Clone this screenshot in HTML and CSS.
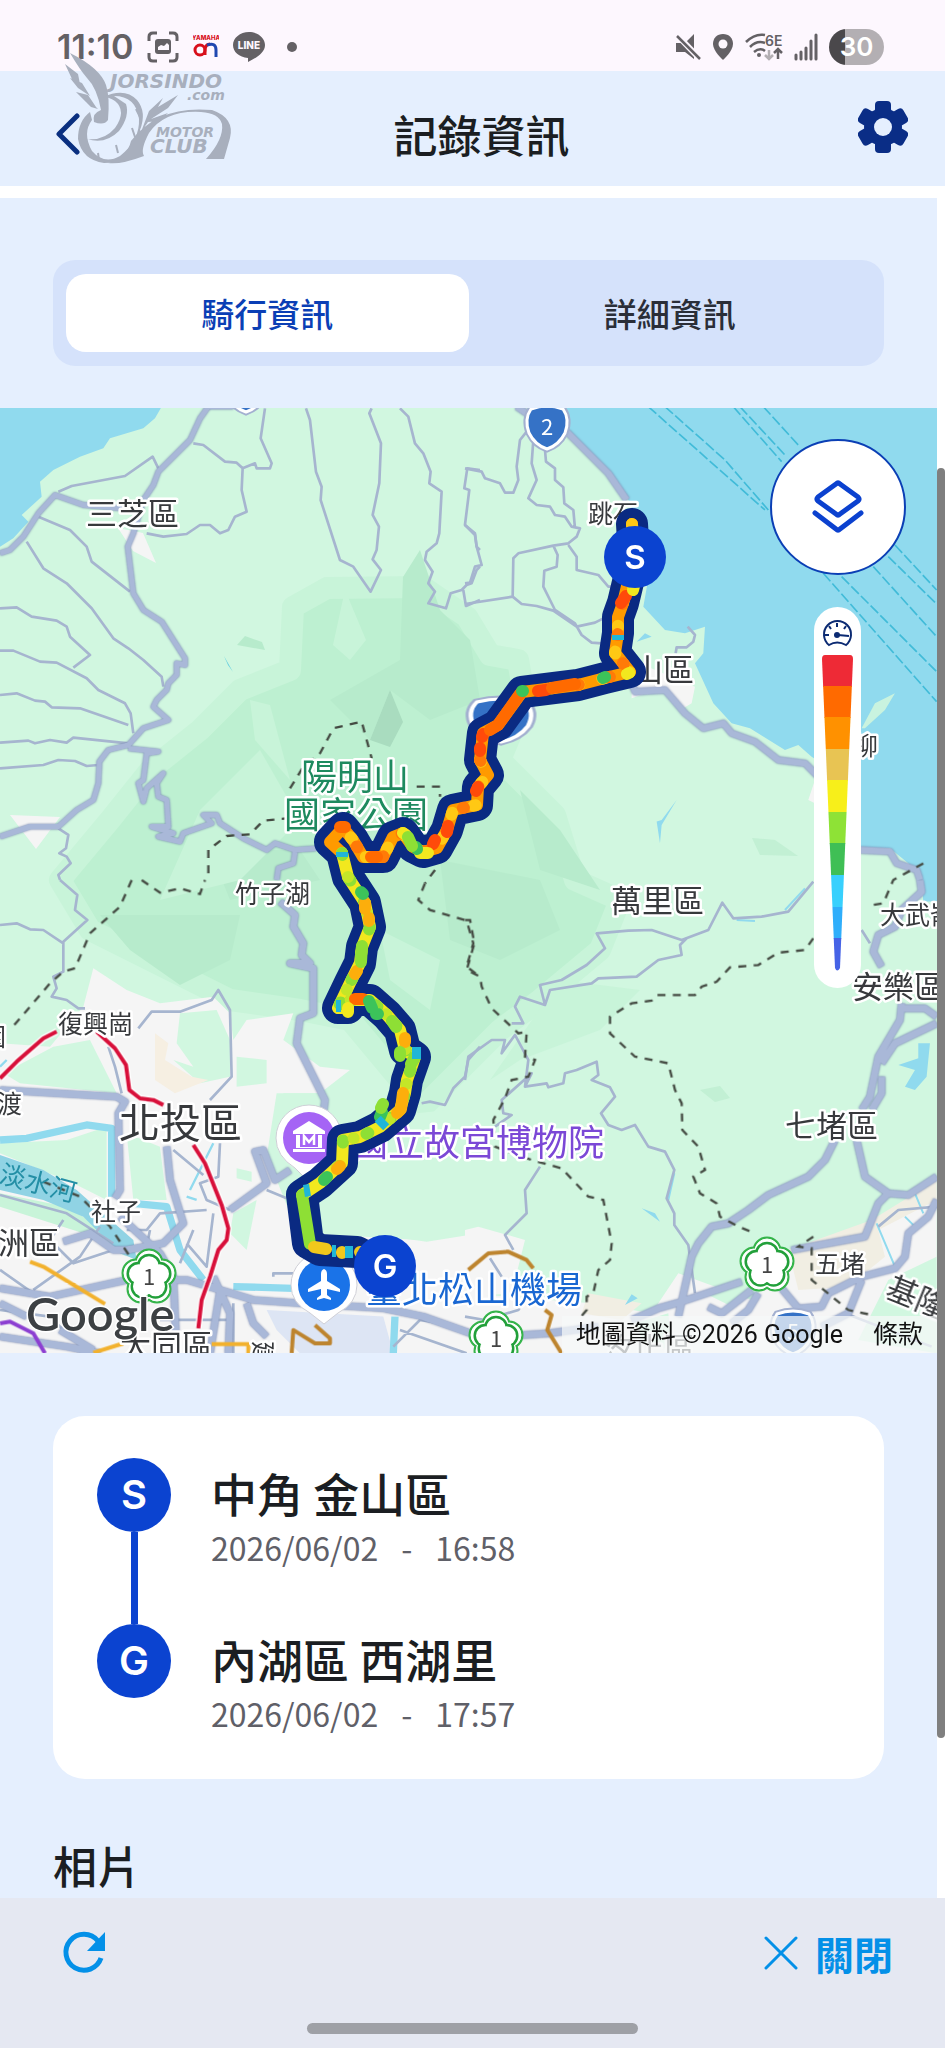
FILE: index.html
```html
<!DOCTYPE html>
<html lang="zh-Hant">
<head>
<meta charset="utf-8">
<meta name="viewport" content="width=device-width, initial-scale=1">
<title>記錄資訊</title>
<link rel="stylesheet" href="styles.css">
</head>
<body>
<div class="statusbar">
  <div class="status-group">
    <span class="clock">11:10</span>
    <svg width="32" height="32" viewBox="0 0 32 32"><path d="M2 10V6q0-4 4-4h4M22 2h4q4 0 4 4v4M30 22v4q0 4-4 4h-4M10 30H6q-4 0-4-4v-4" fill="none" stroke="#646165" stroke-width="3"/><rect x="8" y="8" width="16" height="15" rx="3" fill="#646165"/><path d="M11 19v-3l3-2 3 1 3-3 2 2v5z" fill="#fdf7fe"/></svg>
    <svg class="yamaha" width="26" height="26" viewBox="0 0 26 26"><text x="13" y="6" font-size="6">YAMAHA</text><circle cx="7" cy="16" r="5" fill="none" stroke="#d8101c" stroke-width="3"/><path d="M12 21V15q1-5 5-5" fill="none" stroke="#d8101c" stroke-width="3"/><path d="M14 11q9-3 9 5v7" fill="none" stroke="#1f48b0" stroke-width="3"/></svg>
    <svg class="line-app" width="32" height="32" viewBox="0 0 32 32"><path d="M16 1C7 1 0 7 0 14c0 7 6 12 15 13v4c8-4 17-9 17-17C32 7 25 1 16 1Z" fill="#646165"/><text x="16" y="18" font-size="10">LINE</text></svg>
    <svg width="32" height="12" viewBox="0 0 32 12"><circle cx="13" cy="6" r="5" fill="#646165"/></svg>
  </div>
  <div class="status-group">
    <svg width="26" height="28" viewBox="0 0 26 28"><path d="M19 1v25l-9-7H1v-9h9Z" fill="#646165"/><path d="M1 1L26 27" stroke="#fdf7fe" stroke-width="6"/><path d="M2 3L25 26" stroke="#646165" stroke-width="2.5"/></svg>
    <svg width="22" height="28" viewBox="0 0 22 28"><path d="M11 1C5 1 1 5 1 11c0 7 10 16 10 16s10-9 10-16C21 5 17 1 11 1Z" fill="#646165"/><circle cx="11" cy="11" r="4.500" fill="#fdf7fe"/></svg>
    <svg class="wifi" width="38" height="28" viewBox="0 0 38 28"><path d="M1 9Q10 0 20 2M5 14Q12 7 20 10M9 19q6-5 11-1" fill="none" stroke="#646165" stroke-width="2.500"/><circle cx="14" cy="22" r="2"/><text x="20" y="13" font-size="14">6E</text><path d="M24 17v9M20 22l4 4 4-4" fill="none" stroke="#b3afb3" stroke-width="2.500"/><path d="M33 26V16M29 20l4-4 4 4" fill="none" stroke="#646165" stroke-width="2.500"/></svg>
    <svg width="24" height="28" viewBox="0 0 24 28"><path d="M2 22v4M7 19v7M12 15v11M17 8v18M22 2v24" stroke="#646165" stroke-width="3" stroke-linecap="round"/></svg>
    <span class="battery">30</span>
  </div>
</div>

<header class="header">
  <button class="icon-button" aria-label="返回"><svg width="26" height="42" viewBox="0 0 26 42"><path d="M22 3L4 21l18 18" fill="none" stroke="#0a2f80" stroke-width="5" stroke-linecap="round" stroke-linejoin="round"/></svg></button>
  <h1>記錄資訊</h1>
  <button class="icon-button gear" aria-label="設定"><svg width="50" height="52" viewBox="-25 -26 50 52"><g fill="#0a2d86"><circle r="19"/><rect id="tooth" x="-8" y="-26" width="16" height="52" rx="4"/><use href="#tooth" transform="rotate(60)"/><use href="#tooth" transform="rotate(120)"/></g><circle r="9" fill="#e5effe"/></svg></button>
  <svg class="watermark" width="180" height="114" viewBox="56 52 180 114" aria-hidden="true">
    <g fill="#a8afbd">
      <path d="M70 53Q100 68 106 85Q110 97 108 120Q104 126 94 122Q92 113 101 110Q97 88 87 78Q80 70 70 53Z"/>
      <path d="M65 64l13 10 2 10-8-5zM70 78l12 5 8 13-12-8zM76 92l12 3 8 12-10-5zM86 102l6 1 6 6-7-2z"/>
      <path fill-rule="evenodd" d="M103 97Q125 87 137 100Q147 112 140 130Q144 136 141 149Q130 163 104 163Q82 160 78 139Q78 121 90 112L92 120Q82 133 92 151Q104 165 120 156Q140 140 139 119Q136 96 114 96L126 104Q130 116 119 131Q105 145 87 139Q104 141 115 128Q127 111 115 101Q109 97 103 97Z"/>
      <path d="M141 132L149 111 163 98 158 107 178 95 168 108 151 119 168 113Q160 122 148 122ZM131 141Q158 105 212 110Q235 118 230 138L224 159H206Q224 139 222 124Q219 113 201 112Q165 110 149 133Q140 150 144 156Q120 165 108 163Q127 158 131 141Z"/>
      <path d="M136 109l4 8M132 128l3 9M116 145l2 8M98 153l1 7M84 150l4-3" stroke="#a8afbd" stroke-width="2"/>
      <text x="110" y="88" font-size="20">JORSINDO</text><text x="187" y="100" font-size="14">.com</text><text x="156" y="137" font-size="14">MOTOR</text><text x="150" y="153" font-size="20">CLUB</text>
    </g>
  </svg>
</header>

<main class="viewport">
  <div class="content">
    <div class="tabs" role="tablist">
      <button class="tab is-active" role="tab" aria-selected="true">騎行資訊</button>
      <button class="tab" role="tab" aria-selected="false">詳細資訊</button>
    </div>

    <section class="map" aria-label="騎行路線地圖">
      <svg class="map-canvas" viewBox="0 408 937 945" preserveAspectRatio="xMidYMid slice">
        <defs>
          <g id="freeway">
            <g id="lobes"><circle cx="0" cy="-14" r="12"/><circle cx="13" cy="-4" r="12"/><circle cx="8" cy="12" r="12"/><circle cx="-8" cy="12" r="12"/><circle cx="-13" cy="-4" r="12"/></g>
            <use href="#lobes" fill="#fff" stroke="#35b44a" stroke-width="5"/>
            <use href="#lobes" fill="#fff" stroke="#fff" stroke-width="1"/>
            <use href="#lobes" fill="#fff" stroke="#22a03a" stroke-width="5" transform="scale(.82)"/>
            <use href="#lobes" fill="#fff" transform="scale(.8)"/>
            <circle r="14" fill="#fff"/>
            <text class="shield-no" y="8">1</text>
          </g>
          <g id="shield">
            <path d="M-16-18Q0-24 16-18Q23-8 18 6Q12 18 0 22Q-12 18-18 6Q-23-8-16-18Z" fill="#fff" stroke="#a3b0d0" stroke-width="7"/>
            <path d="M-16-18Q0-24 16-18Q23-8 18 6Q12 18 0 22Q-12 18-18 6Q-23-8-16-18Z" fill="#3572c6" stroke="#fff" stroke-width="3"/>
          </g>
        </defs>

        <rect y="408" width="937" height="945" fill="#d1f7e0"/>
        <path fill="#bdf0d1" stroke="#c8f4d9" stroke-width="22" stroke-linejoin="round" d="M293 607L327 588 423 587 467 617 490 655 518 660 525 700 500 760 555 815 575 880 620 900 600 950 540 1000 500 1030 450 1080 420 1110 400 1080 350 1020 300 1010 230 1000 150 960 90 930 60 880 110 820 150 770 200 730 240 690 290 670Z"/>
        <g fill="#b7ebcc">
          <path d="M403 577L420 550 440 610 470 640 480 700 430 720 390 690 370 740 330 700 400 660ZM210 850L300 850 320 880 230 900ZM100 915L240 915 230 960 180 985 130 950ZM440 860L540 880 560 930 500 960 450 940ZM520 790L560 830 600 890 540 870Z"/>
          <path d="M370 740L390 690 403 722 390 747Z" fill="#a9dcbf"/>
          <path d="M237 645L245 636 262 642 265 650Z"/><path d="M752 838L775 840 798 856 760 855ZM700 1090l20-4 10 12-15 4z" opacity=".6"/>
        </g>
        <path fill="#c8f4d9" d="M333 645L345 590 366 640 350 660ZM160 900L200 810 260 750 300 820 240 880ZM490 1080L560 980 640 990 600 1030 520 1060ZM250 700L270 705 290 780 255 740ZM380 930L440 960 430 1010 390 980Z"/>

        <!-- sea and coast -->
        <g fill="#90daee">
          <path transform="translate(0 400) scale(.3333)" d="M0 20H485L465 55 430 85 380 100 330 115 310 145 240 170 160 210 120 245 125 290 65 345 85 365 40 415 0 440Z"/>
          <path transform="translate(465 400) scale(.3333)" d="M180 20L310 90 430 210 490 300 520 370 560 480 535 620 600 690 660 700 720 680 715 760 690 790 745 910 800 970 855 985 960 1050 1000 1035 1040 1070 1100 1110 1185 1345 1275 1345 1330 1390 1370 1440 1375 1505H1420V20Z"/>
        </g>
        <g transform="translate(465 400) scale(.3333)">
          <path fill="#c9f3df" d="M1190 985L1230 910 1290 880 1260 930 1200 985Z"/>
          <path fill="#f5f5f5" d="M500 780L690 860 680 910 655 925 600 860 500 895ZM1030 1200l20-60v70z"/>
          <path fill="#90daee" d="M515 725l25-25 20 10zM575 1265l15-5 45-60-45 75-5 55z"/>
          <path fill="none" stroke="#41bbd8" stroke-width="5" stroke-dasharray="32 9" d="M550 20L900 330M600 20L780 180 910 330M805 20L950 185M825 20L960 165M895 20L1000 135M1075 520L1415 905M1130 530L1415 815M1225 500L1415 710M1270 470L1415 612M1290 435L1415 570"/>
        </g>
        <path fill="#f5f5f5" d="M118 528L143 533 156 563 133 551ZM10 815l50 2-24 32z"/>
        <path fill="#63cfe0" d="M224 656l9 16-5-7z"/>

        <!-- built-up area -->
        <g transform="translate(0 880) scale(.3333)">
          <path fill="#f5f5f5" d="M280 265L380 330 480 370 640 350 690 400 700 480 740 420 880 400 850 480 960 560 1050 570 960 640 830 640 800 830 830 900 870 1000 900 1060 1100 1060 1280 1085 1440 1060V1430H0V490L150 500 250 380Z"/>
          <path fill="#d1f7e0" d="M10 580L160 500 270 480 350 640 60 610ZM540 400L650 390 690 480 690 590 600 610 520 540 580 560 530 490ZM710 530L800 540 800 610 710 620ZM0 790L200 780 320 740 320 960 220 910 0 820ZM380 760L480 800 500 960 400 960ZM700 1000L770 960 740 1110 690 1060ZM710 865l45 10v30l-45-10zM850 640L960 640 1000 700 1190 660 1250 700 1440 680V1060L1260 1080 920 1060 870 950 830 900Z"/>
          <path fill="#f6efe2" d="M465 460l40 30-10 50 80 50 50 10-100 40-60-40zM200 1000l180 60 20 50-100-30z"/>
          <path fill="#dde5f4" d="M800 1290L1150 1310 1180 1420H900L830 1350Z"/>
          <path fill="#c8f4d9" d="M0 940L200 980 330 1060 380 1130 250 1060 0 980Z"/>
          <path fill="#90d3e4" d="M0 825L130 870 230 930 400 1080 410 1140 360 1120 250 1010 130 960 0 930Z"/>
          <path fill="none" stroke="#90daee" stroke-width="22" stroke-linejoin="round" d="M0 780L80 775 260 735 335 745 335 950M400 970L500 980 540 1110 610 1200M700 1220L880 1225M1185 1310L1180 1420"/>
          <path fill="none" stroke="#90daee" stroke-width="7" d="M570 930L640 790M560 950l30 10M0 560L20 540"/>
        </g>
        <g transform="translate(465 880) scale(.3333)">
          <path fill="#f5f5f5" d="M0 1050L40 1040 180 1080 140 1240 0 1250ZM0 1240L380 1270 560 1300 640 1180 860 1260 1000 1120 1160 1050 1415 930V1420H0Z"/>
          <path fill="#f1eee3" d="M970 1110L1220 1020 1415 900V960L1240 1050 1260 1130 1150 1220 1000 1230ZM370 1240l160 30-60 50-120-20z"/>
          <path fill="#d1f7e0" d="M1270 1200L1415 1130V1420L1180 1380ZM720 1240l120-20-40 60zM510 1330l100-30 10 110-80-20z"/>
          <path fill="#90daee" d="M1360 490L1395 490 1385 590 1350 630 1320 620 1350 570 1300 555 1360 535ZM530 985l40 15 15 25zM480 1275l20-32 18 12z"/>
          <path fill="none" stroke="#90daee" stroke-width="6" d="M1235 1030L1290 1160M1350 940L1375 1000M1320 1010L1350 1040M815 120L870 123M960 90L1020 25M610 960L628 880"/>
        </g>

        <!-- minor roads -->
        <g class="minor">
          <path transform="translate(0 400) scale(.3333)" d="M175 275L215 258 375 228 458 170 475 205M580 130L610 135 675 185 710 188 728 205 765 190 770 205 810 205 815 190 782 115 795 25M728 205L725 270 740 335 705 350 685 390 660 400 630 375 600 375 560 402 490 410 440 400M115 350L210 390 260 440 275 485 390 575M80 425L130 505 200 550 275 625 340 715 385 745 430 780 485 830 490 860M0 625L50 622 95 650 170 662 200 680 210 710 270 765 220 803M0 752H40L120 785 170 788 260 835 295 870 375 910 392 940 400 1000M0 885L50 880 105 902 135 905 155 922 240 925 385 975M0 1028L85 1022 105 1030 150 1020 200 1028 220 1013 385 1030M0 1105L130 1095 175 1080 225 1083 260 1098 295 1095M918 25L930 60 948 215 965 260 962 300 1020 480 1060 500 1112 575 1143 510 1118 478 1130 450 1137 380 1118 345 1138 250 1143 130 1108 40 1115 25M1200 25L1225 50 1245 130 1270 160 1292 215 1288 250 1325 275 1318 400 1310 430 1280 455 1275 480 1298 515 1285 550 1305 575 1285 610 1338 625 1352 580 1385 570 1400 555 1415 550 1430 510 1440 500M1440 210L1402 205 1393 265 1408 270 1395 375 1425 405 1430 440 1440 450M1390 570L1398 618 1440 600M175 1285L205 1305 198 1345 178 1360 200 1370 212 1390 175 1425 180 1440"/>
          <path transform="translate(465 400) scale(.3333)" d="M0 205L50 215 60 235 105 250 120 278 145 278 160 240 155 200 165 120 185 95M205 120L200 190 215 240 190 295 215 315 255 320 270 345 300 350 320 380 345 385 335 410 310 430 265 437 160 460 145 475 143 590 0 612M240 150L243 185 270 205 270 240 295 262 298 310 325 330 330 385M143 590L170 612 215 618 265 632 335 680 390 668 415 655M265 437L278 465 275 500 238 512 235 560 270 630 330 670 350 705 380 728 410 730M310 435L335 470 335 510 400 525 430 560 450 560M668 680L690 705 685 725 665 742 635 742 632 760M0 550L15 548 30 500 50 495 35 440 30 400 0 375"/>
          <path transform="translate(0 880) scale(.3333)" d="M180 0L232 45 225 90 262 120 190 185 190 275 160 290 170 325 155 350 200 360 235 385 255 385M0 135L50 130 90 148 130 150 190 190M415 445L455 395 540 395 635 360 655 330 690 390 695 590 630 660M325 500L345 560 365 640M1440 500L1405 540 1395 590 1360 625 1335 675 1290 665 1265 670M660 790L655 890 600 910 620 960 690 990M520 810L610 885M800 930L860 955M0 945L200 1000 340 1090M190 1020L150 1080 220 1150 340 1110M100 1230L240 1130 300 1040M0 1170L100 1240M380 1050L440 1050 480 1000 620 990M450 1050L430 1150M560 1090L620 1160 640 1000M580 1050L540 1150M700 1270V1420M820 1190V1180H880M0 1290L150 1310 220 1380M480 1320H700M1180 1400L1260 1320 1320 1330M1200 1350L1400 1420"/>
          <path transform="translate(465 880) scale(.3333)" d="M0 600L10 530 80 480 120 480 110 520 150 465 190 540 180 620 245 610 250 622 295 610 300 580 335 570 395 545 400 585 380 600 435 622 450 650 408 700 430 735 470 750 510 735 550 800 600 815 628 870 605 955 628 1000 628 1035 670 1095 690 1240M180 620L200 580 110 660 115 700 140 705 90 740M140 430L175 430 150 380 165 350 240 375 225 315 290 300 365 255 420 205 395 160 490 152 560 150 650 180 730 150 772 68 805 115 890 110 970 95 1045 5M240 375L255 330 380 310 400 295 515 290 580 240 650 225 645 195 665 175M225 860L180 930 185 1000 120 1065 145 1110M1190 150L1215 190M75 1135L110 1190M1240 1040L1300 990 1415 980M1140 1300L1400 1400M0 1310L60 1320 160 1290 180 1260"/>
        </g>

        <!-- main roads -->
        <g class="main-roads">
          <path transform="translate(0 400) scale(.3333)" d="M0 460L30 450 70 410 115 340 165 285 250 315 430 330M625 20L600 55 570 120 475 215 460 255 430 300 400 400 383 440 400 580 430 630 485 665 555 775 555 795 530 790 530 825 505 850 500 870 470 900 460 920 505 960 430 985 385 1035 325 1050 298 1085 295 1150 280 1200 230 1230 175 1280 90 1280 0 1310M385 1045L475 1055 440 1060 430 1140 415 1150 430 1205 440 1165 490 1120 470 1150 475 1190 500 1200 505 1280 455 1280 520 1300 475 1310 540 1325 550 1300 635 1270 610 1245 650 1245 660 1270 730 1315 800 1350 825 1330 885 1350 950 1345M885 1355L880 1390 835 1405 830 1440M625 20H700" stroke-width="16"/>
          <path transform="translate(465 400) scale(.3333)" d="M155 20L185 40 310 100 430 220 485 300M500 850L510 875 600 870 660 940 715 985 775 970 800 1000 870 1025 940 1080 1020 1090 1060 1130M1185 1350L1275 1355 1295 1390 1355 1410 1365 1440" stroke-width="20"/>
          <path transform="translate(0 880) scale(.3333)" d="M840 65L885 105 880 140 910 190 905 225 930 250 870 250 940 265 940 400 900 415 890 490 975 660 970 700M0 630L350 650 375 665 355 700 360 930 345 955M500 800L510 900 550 1030 490 1090 380 1110 340 1110 270 1060 190 1085M690 990L800 910 765 815 790 810 825 900 870 870M0 1225L150 1250 380 1200 560 1200 760 1260 900 1270 1150 1285 1270 1310 1440 1370M360 1010L480 1120 520 1190 530 1420M640 1190L690 1300 685 1420M660 1230L630 1420M740 1270L760 1330 800 1370M0 1270L80 1310M0 1370L200 1400 300 1420M180 1350L280 1410" stroke-width="21"/>
          <path transform="translate(465 880) scale(.3333)" d="M1365 0L1370 35 1310 90 1290 140 1240 165 1225 215 1250 260M1310 370L1305 420 1240 530 1215 650 1190 690M1415 430L1290 490 1250 550M1310 385L1380 385 1415 410M1250 590L1250 640 1220 690M1110 780L1080 840 1030 890 910 945 850 990 790 1030 740 1040 700 1090 680 1130 640 1310M1175 780L1200 890 1270 940 1330 945 1415 890M1270 940L1240 970 1200 1070 980 1110M1415 960L1390 1010 1330 1060 1320 1130 1290 1165 1190 1190 1090 1240 1070 1280 1000 1285 950 1225M830 1205L650 1265 580 1285 500 1320M880 1240L850 1290 800 1330M860 1230L770 1300 730 1280M1190 1200L1150 1300 1070 1340M100 1370L250 1360 400 1340" stroke-width="21"/>
        </g>

        <!-- metro lines -->
        <g fill="none" stroke-linejoin="round" stroke-width="12" transform="translate(0 880) scale(.3333)">
          <path d="M0 595L50 545 130 475 170 455M290 455L345 505 378 555 388 630 420 655 460 660 490 675M580 795L615 850 665 975 685 1045 680 1080 655 1110 630 1190 605 1260 595 1345" stroke="#fff" stroke-width="20"/>
          <path d="M0 595L50 545 130 475 170 455M290 455L345 505 378 555 388 630 420 655 460 660 490 675M580 795L615 850 665 975 685 1045 680 1080 655 1110 630 1190 605 1260 595 1345" stroke="#d8103a"/>
          <path d="M90 1145L130 1160 315 1272M280 1418L370 1390M635 1392H745V1420" stroke="#f2b12d"/>
          <path d="M0 1330L30 1325 100 1360 135 1420" stroke="#8c3fd1"/>
          <path d="M875 1420L880 1350 945 1390 990 1390 990 1375 945 1335M1405 1170L1465 1120 1525 1115 1580 1140 1600 1165M1635 1290L1655 1305 1642 1350 1685 1420" stroke="#bd842e"/>
        </g>

        <!-- district borders -->
        <g fill="none" stroke="#444a42" stroke-width="7" stroke-dasharray="24 22">
          <path transform="translate(0 400) scale(.3333)" d="M870 1165L910 1100 960 1060 1000 985 1085 965 1115 1075M625 1420L625 1350 680 1308 750 1303 790 1262 860 1255M1250 1160L1320 1160 1320 1190M1305 1410L1275 1450"/>
          <path transform="translate(0 880) scale(.3333)" d="M395 0L360 80 270 160 225 265 190 275 150 310 30 450M425 0L480 38 540 25 600 42 615 0M1275 10L1255 60 1290 90 1400 122 1420 190 1400 260 1440 290M130 905L240 950 330 1040 390 1130"/>
          <path transform="translate(465 880) scale(.3333)" d="M0 120L15 120 28 190 5 270 45 290 50 320 80 385 160 460 185 455 180 530 210 540 190 590 140 600 120 655 85 720 90 800 200 840 290 865 370 950 415 960 440 1090 435 1140 400 1170 385 1240 365 1250 365 1290 340 1320M1045 175L1020 210 940 218 880 255 795 262 755 305 710 320 690 345 575 345 560 362 500 370 435 410 435 460 510 530 610 550 630 630 650 670 652 750 700 800 720 870 685 890 705 940 755 970 765 1010 820 1040 870 1060M1045 1070L1000 1100 1040 1105 1040 1200 1150 1290 1220 1305M1375 -50L1285 0 1255 70 1205 78"/>
        </g>

        <!-- road shields -->
        <use href="#shield" x="547" y="427"/><text class="shield-no light" x="547" y="435">2</text>
        <use href="#shield" x="246" y="390"/>
        <use href="#shield" transform="translate(501 720) scale(1.500 1)"/>
        <use href="#shield" x="793" y="1332"/><text class="shield-no light" x="793" y="1340">5</text>
        <use href="#freeway" x="149" y="1277"/>
        <use href="#freeway" x="767" y="1265"/>
        <use href="#freeway" x="496" y="1339"/>

        <!-- place names -->
        <g class="place district">
          <text x="86" y="525">三芝區</text><text x="601" y="681">金山區</text><text x="611" y="912">萬里區</text><text x="852" y="998">安樂區</text><text x="785" y="1137">七堵區</text><text x="-33" y="1254">蘆洲區</text><text x="120" y="1357">大同區</text><text x="602" y="1360">汐止區</text>
          <text transform="translate(884 1296) rotate(22)">基隆區</text>
        </g>
        <g class="place village">
          <text x="588" y="523">跳石</text><text x="828" y="755">野柳</text><text x="235" y="903">竹子湖</text><text x="58" y="1033">復興崗</text><text x="-28" y="1113">關渡</text><text x="91" y="1221">社子</text><text x="880" y="924">大武崙</text><text x="815" y="1273">五堵</text><text x="-44" y="1046">桃園</text>
          <text transform="translate(254 1341) rotate(90)">建</text>
        </g>
        <text class="place city" x="119" y="1138">北投區</text>
        <g class="place poi">
          <text class="park" x="301" y="790">陽明山</text><text class="park" x="284" y="828">國家公園</text>
          <text class="museum" x="352" y="1156">國立故宮博物院</text>
          <text class="airport" x="366" y="1303">臺北松山機場</text>
        </g>
        <text class="river" transform="translate(-2 1182) rotate(15)">淡水河</text>

        <!-- place pins -->
        <g transform="translate(309 1138)">
          <path d="M0-33A33 33 0 0 1 33 0Q33 18 14 30L0 44-14 30Q-33 18-33 0A33 33 0 0 1 0-33Z" fill="#fff" stroke="#cfcfd6"/><circle r="26" fill="#a564f5"/>
          <path d="M-16-7L0-17 16-7V-4H-16ZM-13-3H13V10H-13ZM-16 11H16V14H-16Z" fill="#fff"/><path d="M-9-3H9V9H-9Z" fill="#a564f5"/><path d="M-5 7V-2L0 4 5-2V7" fill="none" stroke="#fff" stroke-width="2.500"/>
        </g>
        <g transform="translate(324 1285)">
          <path d="M0-33A33 33 0 0 1 33 0Q33 18 14 28L0 39-14 28Q-33 18-33 0A33 33 0 0 1 0-33Z" fill="#fff" stroke="#cfcfd6"/><circle r="26" fill="#1a73e8"/>
          <path d="M0-16Q3-15 3-11V-4L16 4V7L3 4V10L7 13V15L0 13-7 15V13L-3 10V4L-16 7V4L-3-4V-11Q-3-15 0-16Z" fill="#fff"/>
        </g>

        <!-- ridden route, coloured by speed -->
        <g fill="none" stroke-linecap="round" stroke-linejoin="round">
          <path stroke="#0a2a82" stroke-width="32" d="M632 524L634 557 623 603 618 617 618 633 615 653 630 672 605 678 578 685 538 690 522 692 498 725 483 733 480 760 488 775 478 787 477 805 453 810 447 830 437 848 423 852 413 847 403 833 393 837 383 857 363 857 353 840 343 828 330 842 342 853 348 877 365 903 370 927 362 947 360 963 350 983 338 1008 348 1008 348 1000 370 1000 387 1015 400 1030 405 1050 415 1057 407 1080 405 1093 400 1110 380 1127 360 1137 343 1140 342 1163 320 1183 302 1195 308 1243 320 1250 357 1252 385 1266"/>
          <g stroke-width="12">
            <path stroke="#ff9a00" d="M632 524L634 557 623 603 618 617 618 633 615 653 630 672 605 678 578 685 538 690 522 692 498 725 483 733 480 760 488 775 478 787 477 805 453 810 447 830 437 848 423 852 413 847 403 833 393 837 383 857 363 857 353 840 343 828 330 842 342 853"/>
            <path stroke="#f2e81e" d="M342 853L348 877 365 903 370 927 362 947 360 963 350 983 338 1008 348 1008 348 1000 370 1000 387 1015 400 1030 405 1050 415 1057 407 1080 405 1093 400 1110 380 1127 360 1137 343 1140 342 1163 320 1183 302 1195"/>
            <path stroke="#ffc814" stroke-dasharray="2 24" d="M632 524L634 557 623 603 618 617 618 633 615 653 630 672 605 678 578 685 538 690M480 760L488 775 478 787 477 805 453 810 447 830 437 848 423 852 413 847 403 833 393 837 383 857 363 857 353 840 343 828"/>
            <path stroke="#ff7a08" stroke-dasharray="1 31" d="M623 603L618 617 618 633 615 653 630 672 605 678 578 685 538 690M480 760L488 775 478 787 477 805 453 810 447 830 437 848 423 852 413 847 403 833 393 837 383 857 363 857 353 840 343 828"/>
            <path stroke="#8edf35" stroke-dasharray="2 25" d="M342 853L348 877 365 903 370 927 362 947 360 963 350 983 338 1008 348 1008 348 1000 370 1000 387 1015 400 1030 405 1050 415 1057 407 1080 405 1093 400 1110 380 1127 360 1137 343 1140 342 1163 320 1183"/>
            <path stroke="#c4e628" stroke-dasharray="0 41" d="M348 877L365 903 370 927 362 947 360 963 350 983 338 1008 348 1008 348 1000 370 1000 387 1015 400 1030 405 1050 415 1057 407 1080 405 1093 400 1110 380 1127 360 1137 343 1140 342 1163 320 1183"/>
            <path stroke="#ff4a0a" d="M626 596l-5 7M538 691l8-1M483 734l-1 3M480 748v3M478 787l-2 4M448 826l-1 6M435 840l-2 4"/>
            <path stroke="#ff6a00" d="M520 694L498 725 490 730M575 684L552 688M340 827l5 0M355 999h8M371 857l6 0"/>
            <path stroke="#fcae0c" d="M365 903v6M369 918v3M355 974l2-3M405 1038v4M403 1093l-2 16-4 4M340 1166l-3 3"/>
            <path stroke="#f2e81e" d="M629 673l-2 1M403 833l3 2M420 853h8M633 590l1-4M348 1008v4"/>
            <path stroke="#3cc35a" d="M605 677l-2 1M523 691h-1M416 847l1 2M361 892l2 2M369 1001l3 7M376 1014h2M382 1112l-2 5M327 1177l-3 3"/>
            <path stroke="#8edf35" d="M362 946l-1 16M415 1057l-4 7M302 1195L310 1244M408 837l4 9M400 1052l0 4M383 1104l-2 4M392 1021l4 6"/>
            <path stroke="#f2c81c" d="M314 1247L326 1249M342 1253v-1M360 1252h3"/>
            <path stroke="#20b6d8" stroke-linecap="butt" d="M618 635v5M342 852v5M336 1006h5M412 1053h9M379 1126l6-6M304 1191l6-1M332 1251h4M345 1252h8"/>
          </g>
        </g>
        <g class="stop-pin"><circle cx="635" cy="557" r="31"/><text x="635" y="569">S</text><circle cx="385" cy="1266" r="31"/><text x="385" y="1278">G</text></g>
        <text class="google" x="26" y="1331">Google</text>
      </svg>

      <button class="layers" aria-label="圖層"><svg width="56" height="56" viewBox="-28 -28 56 56"><path d="M-2-23Q0-25 2-23L20-10Q22-8 20-6L2 7Q0 9-2 7L-20-6Q-22-8-20-10ZM-23 6L-2 22Q0 24 2 22L23 6" fill="none" stroke="#0b41cf" stroke-width="5" stroke-linecap="round" stroke-linejoin="round"/></svg></button>

      <div class="speed-legend" role="img" aria-label="速度圖例">
        <svg width="47" height="381" viewBox="0 0 47 381">
          <g fill="none" stroke="#0b2a72" stroke-width="2"><path d="M15 38A13.500 13.500 0 1 1 32 38Q23 33 15 38Z"/><path d="M24 28L35 29M23 16v4M11 28h4M15 19l2 3M32 19l-2 3"/></g><circle cx="23" cy="28" r="3" fill="#0b2a72"/>
          <clipPath id="taper"><path d="M11 48H36Q39 48 39 52L26 361Q23 366 21 361L8 52Q8 48 11 48Z"/></clipPath>
          <g clip-path="url(#taper)"><rect y="48" width="47" height="32" fill="#ee2a36"/><rect y="79" width="47" height="32" fill="#ff6a00"/><rect y="110" width="47" height="32" fill="#ff9100"/><rect y="142" width="47" height="32" fill="#e8c453"/><rect y="173" width="47" height="32" fill="#f7ef1a"/><rect y="205" width="47" height="32" fill="#8ee236"/><rect y="236" width="47" height="32" fill="#3fbf55"/><rect y="268" width="47" height="32" fill="#38d0fd"/><rect y="300" width="47" height="32" fill="#2faefb"/><rect y="331" width="47" height="36" fill="#4663e6"/></g>
        </svg>
      </div>
      <div class="attribution"><span>地圖資料 ©2026 Google</span><a href="#terms">條款</a></div>
    </section>

    <section class="trip">
      <div class="stop">
        <span class="stop-mark">S</span>
        <div><h2>中角 金山區</h2><p class="when"><span>2026/06/02</span><span>-</span><time>16:58</time></p></div>
      </div>
      <div class="stop">
        <span class="stop-mark">G</span>
        <div><h2>內湖區 西湖里</h2><p class="when"><span>2026/06/02</span><span>-</span><time>17:57</time></p></div>
      </div>
    </section>

    <h2 class="photos">相片</h2>
  </div>
  <div class="scroll-track" aria-hidden="true"><div class="scroll-thumb"></div></div>
</main>

<footer class="toolbar">
  <div class="toolbar-row">
    <button class="icon-button" aria-label="重新整理"><svg width="44" height="44" viewBox="0 0 44 44"><path d="M36 10A18 18 0 1 0 39 27" fill="none" stroke="#0390e8" stroke-width="5"/><path d="M43 1V20H25Z" fill="#0390e8"/></svg></button>
    <button class="close"><svg width="34" height="34" viewBox="0 0 34 34"><path d="M2 2L32 32M32 2L2 32" stroke="#0390e8" stroke-width="3" stroke-linecap="round"/></svg>關閉</button>
  </div>
  <div class="home-bar"></div>
</footer>
</body>
</html>
```

FILE: styles.css
```css
* { box-sizing: border-box; }

body {
  margin: 0;
  height: 100vh;
  display: flex;
  flex-direction: column;
  background: #fff;
  color: #1b1e22;
  font-family: "Noto Sans CJK TC", "Noto Sans", sans-serif;
}

h1, h2, p { margin: 0; }

button {
  border: 0;
  padding: 0;
  background: none;
  color: inherit;
  font: inherit;
}

svg { display: block; }

/* status bar */
.statusbar {
  flex: none;
  display: flex;
  justify-content: space-between;
  align-items: center;
  height: 71px;
  padding: 22px 61px 0 57px;
  background: #fdf7fe;
  color: #646165;
  font-family: Inter, sans-serif;
}

.status-group { display: flex; align-items: center; gap: 14px; }
.status-group:last-child { gap: 11px; }
.clock { font-size: 34px; font-weight: 600; }
.yamaha text { fill: #d8101c; font-weight: 800; text-anchor: middle; }
.line-app text { fill: #fdf7fe; font-weight: 800; text-anchor: middle; }
.wifi { fill: #646165; font-weight: 600; }

.battery {
  width: 55px;
  border-radius: 18px;
  background: linear-gradient(to right, #4a484b 30%, #b3afb3 30%);
  color: #fff;
  font-size: 26px;
  font-weight: 600;
  line-height: 36px;
  text-align: center;
}

/* page header */
.header {
  position: relative;
  flex: none;
  display: grid;
  grid-template-columns: 50px 1fr 50px;
  align-items: center;
  height: 115px;
  padding: 30px 37px 20px 55px;
  background: #e5effe;
}

.header h1 { font-size: 44px; font-weight: 500; line-height: 64px; text-align: center; }
.header .gear { align-self: start; }
.watermark {
  position: absolute;
  left: 56px;
  top: -19px;
  font-family: "DejaVu Sans", sans-serif;
  font-weight: 700;
  font-style: italic;
}

/* scrolling area */
.viewport {
  flex: 1;
  min-height: 0;
  display: grid;
  grid-template-columns: 1fr 8px;
  margin-top: 12px;
  overflow: hidden;
}

.content { min-width: 0; padding-top: 62px; background: #e5effe; }

.scroll-track { display: grid; grid-template-rows: 270fr 1270fr 160fr; }
.scroll-thumb { grid-row: 2; border-radius: 4px; background: #7f7f7f; }

.tabs {
  display: grid;
  grid-template-columns: 1fr 1fr;
  margin: 0 53px 42px;
  padding: 14px 13px;
  border-radius: 22px;
  background: #d5e2fb;
}

.tab {
  border-radius: 20px;
  color: #2a2e38;
  font-size: 33px;
  font-weight: 500;
  line-height: 78px;
}

.tab.is-active { background: #fff; color: #0b3fb5; }

/* map */
.map { position: relative; }
.map-canvas { width: 100%; height: auto; aspect-ratio: 937 / 945; }
.minor { fill: none; stroke: #a6b5cf; stroke-width: 8px; stroke-linejoin: round; }
.main-roads { fill: none; stroke: #a9b8d8; stroke-linejoin: round; filter: drop-shadow(0 0 1px #7383ac); }

.place { fill: #37393c; stroke: #fff; stroke-width: 5px; stroke-linejoin: round; paint-order: stroke; }
.district { font-size: 31px; }
.village { font-size: 25px; }
.city { font-size: 41px; }
.poi { font-size: 36px; }
.park { fill: #1e8a5f; }
.museum { fill: #7b48d6; }
.airport { fill: #1967d2; }
.river { fill: #248fa6; font-size: 26px; }
.shield-no { fill: #444; font-size: 22px; text-anchor: middle; }
.shield-no.light { fill: #fff; }
.google {
  fill: #3c4043;
  stroke: #fff;
  stroke-width: 3px;
  paint-order: stroke;
  font-family: Lato, sans-serif;
  font-size: 47px;
  font-weight: 600;
}

.stop-pin { fill: #0b43d0; font-family: Inter, sans-serif; font-size: 33px; font-weight: 600; text-anchor: middle; }
.stop-pin text { fill: #fff; }

.layers {
  position: absolute;
  top: 31px;
  right: 31px;
  display: grid;
  place-items: center;
  width: 136px;
  height: 136px;
  border: 2px solid #0b3fb5;
  border-radius: 50%;
  background: #fff;
}

.speed-legend { position: absolute; top: 199px; right: 76px; border-radius: 24px; background: #fff; }

.attribution {
  position: absolute;
  right: 0;
  bottom: 0;
  display: flex;
  gap: 30px;
  padding: 0 14px;
  background: rgba(245, 248, 248, 0.75);
  color: #111;
  font-family: Roboto, "Noto Sans CJK TC", sans-serif;
  font-size: 25px;
  line-height: 37px;
}

.attribution a { color: inherit; text-decoration: none; }

/* start and goal */
.trip {
  display: grid;
  gap: 92px;
  margin: 63px 53px 0;
  padding: 42px 44px 81px;
  border-radius: 32px;
  background: #fff;
}

.stop { position: relative; display: flex; gap: 40px; height: 74px; }
.stop + .stop::before {
  content: "";
  position: absolute;
  left: 34px;
  bottom: 100%;
  width: 7px;
  height: 92px;
  background: #0b43d0;
}

.stop-mark {
  flex: none;
  width: 74px;
  height: 74px;
  border-radius: 50%;
  background: #0b43d0;
  color: #fff;
  font-family: Inter, sans-serif;
  font-size: 40px;
  font-weight: 600;
  line-height: 74px;
  text-align: center;
}

.stop h2 { font-size: 46px; font-weight: 500; line-height: 68px; }
.when { display: flex; gap: 23px; color: #5f6068; font-size: 32px; line-height: 42px; }

.photos { margin: 56px 53px 0; font-size: 44px; font-weight: 500; line-height: 60px; }

/* bottom toolbar */
.toolbar {
  flex: none;
  display: flex;
  flex-direction: column;
  justify-content: space-between;
  align-items: center;
  height: 150px;
  padding: 26px 0 14px;
  background: #e5e8f2;
}

.toolbar-row { align-self: stretch; display: flex; justify-content: space-between; align-items: center; padding: 0 52px 0 62px; }
.close { display: flex; align-items: center; gap: 17px; color: #0390e8; font-size: 39px; font-weight: 700; line-height: 58px; }
.home-bar { width: 35%; height: 11px; border-radius: 6px; background: #9ea0a6; }
```
